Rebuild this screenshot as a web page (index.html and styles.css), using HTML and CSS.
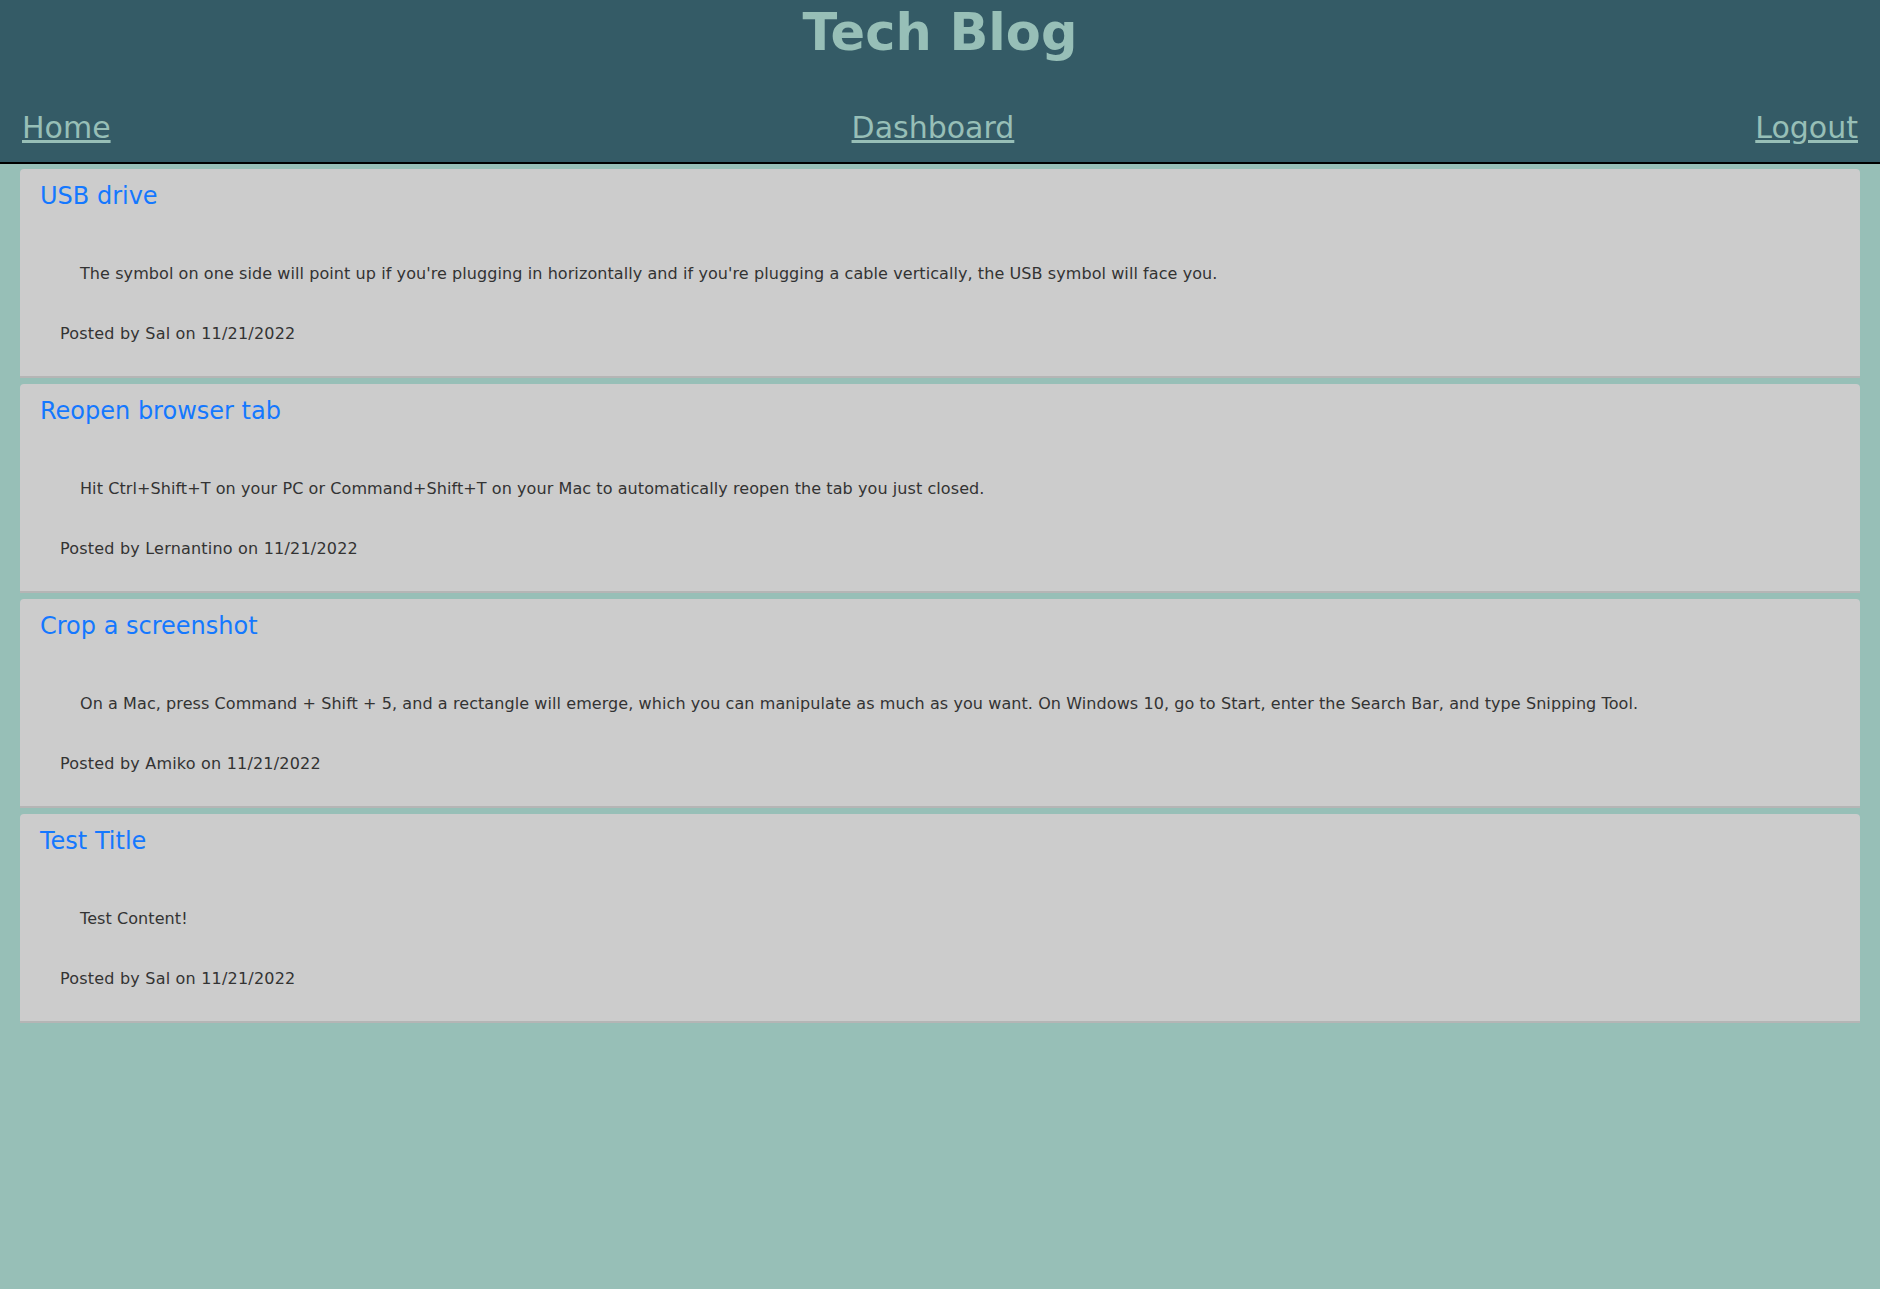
FILE: index.html
```html
<!DOCTYPE html>
<html lang="en">
<head>
<meta charset="utf-8">
<title>Tech Blog</title>
<link rel="stylesheet" href="styles.css">
</head>
<body>
<header class="site-header">
  <h1 class="site-title">Tech Blog</h1>
  <nav class="site-nav">
    <a href="#" class="nav-link">Home</a>
    <a href="#" class="nav-link">Dashboard</a>
    <a href="#" class="nav-link">Logout</a>
  </nav>
</header>
<main class="posts">
  <article class="card">
    <h2 class="card-title">USB drive</h2>
    <p class="card-content">The symbol on one side will point up if you're plugging in horizontally and if you're plugging a cable vertically, the USB symbol will face you.</p>
    <p class="card-meta">Posted by Sal on 11/21/2022</p>
  </article>
  <article class="card">
    <h2 class="card-title">Reopen browser tab</h2>
    <p class="card-content">Hit Ctrl+Shift+T on your PC or Command+Shift+T on your Mac to automatically reopen the tab you just closed.</p>
    <p class="card-meta">Posted by Lernantino on 11/21/2022</p>
  </article>
  <article class="card">
    <h2 class="card-title">Crop a screenshot</h2>
    <p class="card-content">On a Mac, press Command + Shift + 5, and a rectangle will emerge, which you can manipulate as much as you want. On Windows 10, go to Start, enter the Search Bar, and type Snipping Tool.</p>
    <p class="card-meta">Posted by Amiko on 11/21/2022</p>
  </article>
  <article class="card">
    <h2 class="card-title">Test Title</h2>
    <p class="card-content">Test Content!</p>
    <p class="card-meta">Posted by Sal on 11/21/2022</p>
  </article>
</main>
</body>
</html>
```

FILE: styles.css
```css
html, body {
  margin: 0;
  padding: 0;
}

body {
  background: #97bfb7;
  font-family: "DejaVu Sans", Verdana, sans-serif;
  min-height: 1289px;
}

.site-header {
  background: #345b66;
  padding: 4px 22px 17px;
  border-bottom: 2px solid #000;
}

.site-title {
  margin: 0 0 48px;
  text-align: center;
  font-size: 51px;
  font-weight: bold;
  color: #97bfb7;
  line-height: 58px;
}

.site-nav {
  display: flex;
  justify-content: space-between;
  align-items: baseline;
}

.nav-link {
  font-size: 30px;
  line-height: 35px;
  color: #97bfb7;
  text-decoration: underline;
}

.posts {
  display: flex;
  flex-direction: column;
  gap: 6px;
  padding: 5px 20px;
}

.card {
  background: #cccccc;
  border-radius: 4px 4px 0 0;
  border-bottom: 2px solid #b5b5b5;
  padding: 13px 0 33px;
}

.card-title {
  margin: 0;
  padding-left: 20px;
  font-size: 24px;
  font-weight: normal;
  line-height: 28px;
  color: #1478ff;
}

.card-content {
  margin: 54px 0 0;
  padding-left: 60px;
  font-size: 16px;
  line-height: 19px;
  letter-spacing: 0.08px;
  color: #333333;
}

.card-meta {
  margin: 41px 0 0;
  padding-left: 40px;
  font-size: 16px;
  line-height: 19px;
  letter-spacing: 0.2px;
  color: #333333;
}
```
